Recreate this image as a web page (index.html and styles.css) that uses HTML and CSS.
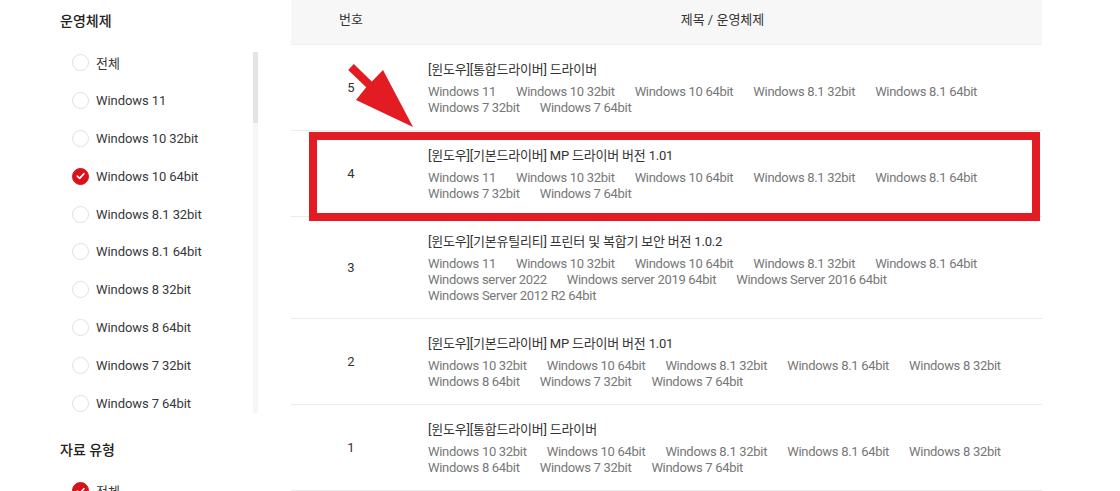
FILE: index.html
```html
<!DOCTYPE html>
<html lang="ko">
<head>
<meta charset="utf-8">
<title>드라이버 다운로드</title>
<link rel="stylesheet" href="styles.css">
</head>
<body>
<div class="page">
  <aside class="sidebar">
    <h3 class="side-title">운영체제</h3>
    <div class="side-scroll">
      <ul class="radio-list">
        <li class="radio"><span class="dot"></span>전체</li>
        <li class="radio"><span class="dot"></span>Windows 11</li>
        <li class="radio"><span class="dot"></span>Windows 10 32bit</li>
        <li class="radio checked"><span class="dot"><svg viewBox="0 0 16 16" width="16" height="16"><path d="M4.6 8.2 L7.1 10.6 L11.6 5.6" fill="none" stroke="#fff" stroke-width="1.8" stroke-linecap="round" stroke-linejoin="round"/></svg></span>Windows 10 64bit</li>
        <li class="radio"><span class="dot"></span>Windows 8.1 32bit</li>
        <li class="radio"><span class="dot"></span>Windows 8.1 64bit</li>
        <li class="radio"><span class="dot"></span>Windows 8 32bit</li>
        <li class="radio"><span class="dot"></span>Windows 8 64bit</li>
        <li class="radio"><span class="dot"></span>Windows 7 32bit</li>
        <li class="radio"><span class="dot"></span>Windows 7 64bit</li>
      </ul>
      <div class="scrollbar"><div class="thumb"></div></div>
    </div>
    <h3 class="side-title second">자료 유형</h3>
    <ul class="radio-list short">
      <li class="radio checked"><span class="dot"><svg viewBox="0 0 16 16" width="16" height="16"><path d="M4.6 8.2 L7.1 10.6 L11.6 5.6" fill="none" stroke="#fff" stroke-width="1.8" stroke-linecap="round" stroke-linejoin="round"/></svg></span>전체</li>
    </ul>
  </aside>

  <section class="board">
    <div class="row head">
      <div class="c-num">번호</div>
      <div class="c-title center">제목 / 운영체제</div>
    </div>
    <div class="row">
      <div class="c-num">5</div>
      <div class="c-title">
        <div class="title">[윈도우][통합드라이버] 드라이버</div>
        <div class="os"><span>Windows 11</span><span>Windows 10 32bit</span><span>Windows 10 64bit</span><span>Windows 8.1 32bit</span><span>Windows 8.1 64bit</span><span>Windows 7 32bit</span><span>Windows 7 64bit</span></div>
      </div>
    </div>
    <div class="row">
      <div class="c-num">4</div>
      <div class="c-title">
        <div class="title">[윈도우][기본드라이버] MP 드라이버 버전 1.01</div>
        <div class="os"><span>Windows 11</span><span>Windows 10 32bit</span><span>Windows 10 64bit</span><span>Windows 8.1 32bit</span><span>Windows 8.1 64bit</span><span>Windows 7 32bit</span><span>Windows 7 64bit</span></div>
      </div>
    </div>
    <div class="row">
      <div class="c-num">3</div>
      <div class="c-title">
        <div class="title">[윈도우][기본유틸리티] 프린터 및 복합기 보안 버전 1.0.2</div>
        <div class="os"><span>Windows 11</span><span>Windows 10 32bit</span><span>Windows 10 64bit</span><span>Windows 8.1 32bit</span><span>Windows 8.1 64bit</span><span>Windows server 2022</span><span>Windows server 2019 64bit</span><span>Windows Server 2016 64bit</span><span>Windows Server 2012 R2 64bit</span></div>
      </div>
    </div>
    <div class="row">
      <div class="c-num">2</div>
      <div class="c-title">
        <div class="title">[윈도우][기본드라이버] MP 드라이버 버전 1.01</div>
        <div class="os"><span>Windows 10 32bit</span><span>Windows 10 64bit</span><span>Windows 8.1 32bit</span><span>Windows 8.1 64bit</span><span>Windows 8 32bit</span><span>Windows 8 64bit</span><span>Windows 7 32bit</span><span>Windows 7 64bit</span></div>
      </div>
    </div>
    <div class="row">
      <div class="c-num">1</div>
      <div class="c-title">
        <div class="title">[윈도우][통합드라이버] 드라이버</div>
        <div class="os"><span>Windows 10 32bit</span><span>Windows 10 64bit</span><span>Windows 8.1 32bit</span><span>Windows 8.1 64bit</span><span>Windows 8 32bit</span><span>Windows 8 64bit</span><span>Windows 7 32bit</span><span>Windows 7 64bit</span></div>
      </div>
    </div>
  </section>

  <div class="highlight-box"></div>
  <svg class="arrow" width="1120" height="491" viewBox="0 0 1120 491">
    <polygon points="348.2,69.9 353.8,64.1 371.8,81.5 383,70 413,127 356,100 366.2,87.3" fill="#e31b23"/>
  </svg>
</div>
</body>
</html>
```

FILE: styles.css
```css
* { box-sizing: border-box; }
html, body { margin: 0; padding: 0; background: #fff; }
body {
  font-family: Roboto, "Noto Sans CJK KR", "Noto Sans", sans-serif;
  color: #333;
  overflow: hidden;
}
.page {
  position: relative;
  display: flex;
  align-items: flex-start;
  padding-left: 60px;
  gap: 33px;
  height: 491px;
  overflow: hidden;
}

/* Sidebar */
.sidebar { width: 198px; flex: none; }
.side-title {
  margin: 0;
  padding-top: 11px;
  font-size: 14px;
  line-height: 20px;
  font-weight: 500;
  color: #222;
}
.side-title.second { padding-top: 0; margin-top: 24px; }
.side-scroll {
  display: flex;
  margin-top: 13px;
  height: 372px;
  overflow: hidden;
}
.radio-list {
  list-style: none;
  margin: 0;
  padding: 0;
  flex: 1;
}
.radio-list.short { margin-top: 12px; }
.radio {
  display: flex;
  align-items: center;
  height: 37.8px;
  padding-left: 12px;
  gap: 7px;
  font-size: 13px;
  letter-spacing: -0.08px;
  color: #383838;
}
.dot {
  width: 17px;
  height: 17px;
  border-radius: 50%;
  border: 1px solid #e0e0e0;
  background: #fff;
  display: flex;
  align-items: center;
  justify-content: center;
  flex: none;
}
.radio.checked .dot {
  background: #d7121c;
  border-color: #d7121c;
}
.scrollbar {
  width: 5px;
  margin-top: 8px;
  height: 361px;
  background: #f6f6f6;
  flex: none;
}
.thumb {
  height: 71px;
  background: #e3e3e3;
}

/* Board */
.board { width: 751px; flex: none; }
.row {
  display: grid;
  grid-template-columns: 120px 1fr;
  border-bottom: 1px solid #ebebeb;
}
.row.head {
  background: #f7f7f7;
  height: 45px;
  border-bottom: 1px solid #f0f0f0;
  font-size: 13px;
  color: #333;
}
.row.head .c-num,
.row.head .c-title {
  padding-top: 10px;
  padding-bottom: 0;
  line-height: 20px;
  align-self: start;
  text-align: center;
}
.row.head .c-title { padding-left: 0; padding-right: 8px; }
.c-num {
  align-self: center;
  text-align: center;
  font-size: 13px;
  color: #333;
}
.c-title {
  padding: 15px 17px 14px 17px;
}
.title {
  font-size: 13px;
  line-height: 20px;
  color: #333;
  letter-spacing: -0.2px;
}
.os {
  margin-top: 4px;
  display: flex;
  flex-wrap: wrap;
  column-gap: 20px;
  font-size: 13px;
  line-height: 16px;
  color: #777;
  letter-spacing: -0.3px;
}

/* Annotation overlays */
.highlight-box {
  position: absolute;
  left: 309px;
  top: 132px;
  width: 731px;
  height: 89px;
  border: 8px solid #e31b23;
}
.arrow {
  position: absolute;
  left: 0;
  top: 0;
  pointer-events: none;
}
```
